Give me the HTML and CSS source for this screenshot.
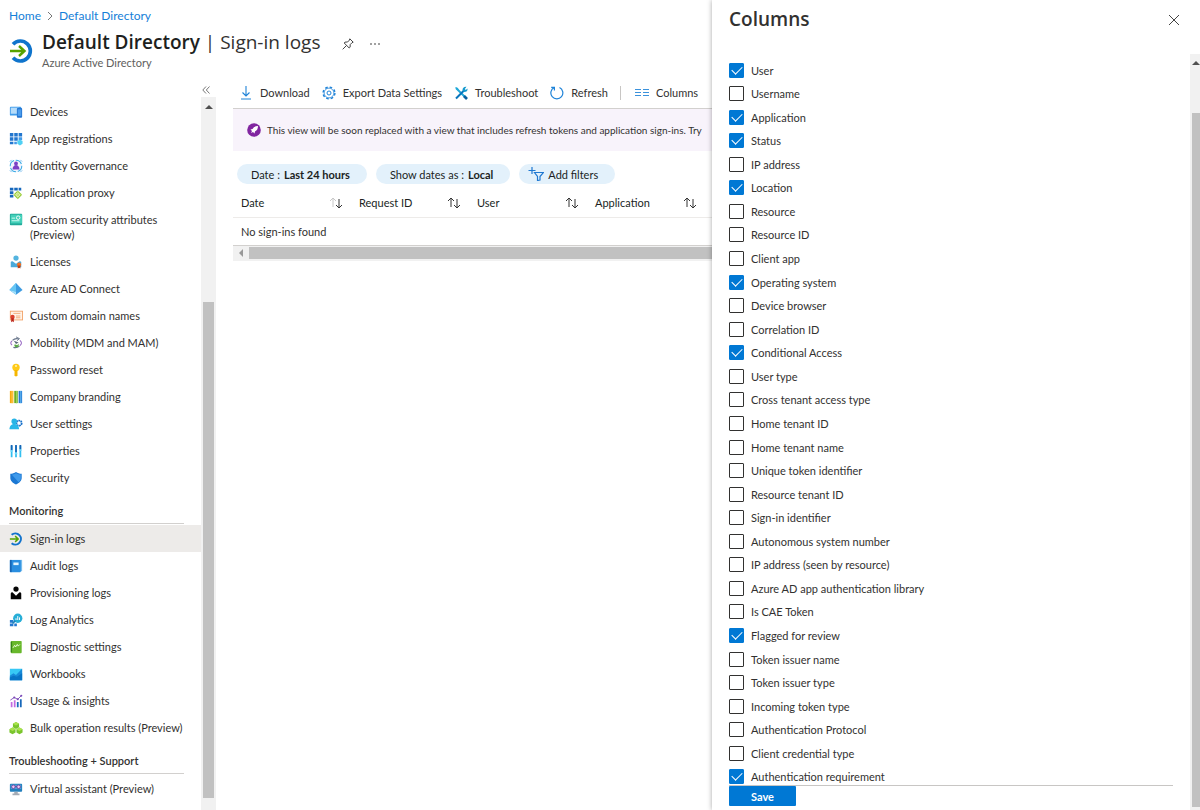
FILE: index.html
```html
<!DOCTYPE html>
<html lang="en">
<head>
<meta charset="utf-8">
<title>Default Directory | Sign-in logs</title>
<link rel="stylesheet" href="styles.css">
</head>
<body>
<div class="app">
<div class="workspace">
  <header class="page-header">
    <nav class="breadcrumb" aria-label="Breadcrumb">
      <a href="#">Home</a>
      <svg class="crumb-sep" viewBox="0 0 6 10"><path d="M1 1l4 4-4 4" fill="none" stroke="#777"/></svg>
      <a href="#">Default Directory</a>
    </nav>
    <div class="title-row">
      <svg class="title-icon" viewBox="0 0 24 24"><path d="M4 5.2A10 10 0 1 1 4 18.8" fill="none" stroke="#0f74cc" stroke-width="3.6"/><path d="M1 12h14M10 7l5.5 5-5.5 5" fill="none" stroke="#57a300" stroke-width="2.4"/></svg>
      <div class="title-text">
        <h1><strong>Default Directory</strong> | Sign-in logs</h1>
        <p>Azure Active Directory</p>
      </div>
      <button class="icon-button pin" aria-label="Pin"><svg viewBox="0 0 12 12"><path d="M7.800.8l3.400 3.400-1.200.5-1.800 1.900-.1 2.600-.9.800L2.200 5l.8-.9 2.600-.1 1.800-1.900zM4.500 7.500L.7 11.300" fill="none" stroke="#444"/></svg></button>
      <button class="icon-button more" aria-label="More"><svg viewBox="0 0 12 12"><path d="M1 6h2M5 6h2M9 6h2" stroke="#444" stroke-width="1.200"/></svg></button>
    </div>
  </header>
  <div class="body-row">
    <aside class="sidebar">
      <nav class="menu" aria-label="Directory">
        <button class="collapse" aria-label="Collapse menu"><svg viewBox="0 0 8 8"><path d="M4 .5L.8 4 4 7.500M7.500.5L4.300 4l3.200 3.500" fill="none" stroke="#555" stroke-width=".8"/></svg></button>
        <a href="#"><svg viewBox="0 0 16 16"><rect x="1" y="2" width="13" height="10" rx="1" fill="#3f9bea"/><rect x="2" y="3" width="9" height="7" fill="#b5dcfa"/><rect x="9" y="3.500" width="6" height="11" rx="1" fill="#2576d2"/><rect x="10" y="5" width="4" height="7.500" fill="#4b9cec"/></svg>Devices</a>
        <a href="#"><svg viewBox="0 0 16 16"><path d="M1 1h4v4H1zM6 1h4v4H6zM11 1h4v4h-4zM1 6h4v4H1zM6 6h4v4H6zM1 11h4v3H1z" fill="#2276ce"/><path d="M11 6h4v3h-4zM6 11h3v3H6z" fill="#4199e8"/><path d="M12.500 8.500l3 1.700v3.300l-3 1.800-3-1.800v-3.300z" fill="#50d0f4"/></svg>App registrations</a>
        <a href="#"><svg viewBox="0 0 16 16"><circle cx="8" cy="8" r="6.600" fill="#f2f4fd" stroke="#38a9e4" stroke-width="1.200" stroke-dasharray="8 2"/><circle cx="8" cy="5" r="2.200" fill="#7b3fc5"/><path d="M4 12c0-7 8-7 8 0z" fill="#7b3fc5"/><path d="M1 3l2-2M13 1l2 2M1 13l2 2M13 15l2-2" stroke="#6fb5ea"/></svg>Identity Governance</a>
        <a href="#"><svg viewBox="0 0 16 16"><path d="M1 2h4v3H1zM6 2h4v3H6zM11 2h3v3h-3zM1 6h4v3H1zM1 10h4v3H1z" fill="#1768bd"/><path d="M10 5l5 5-5 5-5-5z" fill="#91c82e"/><circle cx="10" cy="10" r="2" fill="none" stroke="#f1fad1"/><path d="M10 5.500v9M5.500 10h9" stroke="#e3f4af" stroke-width=".7"/></svg>Application proxy</a>
        <a class="two-line" href="#"><svg viewBox="0 0 16 16"><rect x="1" y="2" width="14" height="13" rx="1" fill="#20a999"/><rect x="2" y="3" width="13" height="10" fill="#43d0b9"/><circle cx="10.500" cy="6.500" r="2" fill="none" stroke="#fff"/><path d="M3 7h4M3 10h9" stroke="#e4fff9"/></svg><span>Custom security attributes<br>(Preview)</span></a>
        <a href="#"><svg viewBox="0 0 16 16"><circle cx="8" cy="3.500" r="3" fill="#54b4df"/><path d="M2 14V8q0-1 2-1l4 3 4-3q2 0 2 1v6z" fill="#4ba9d9"/><circle cx="11.500" cy="11" r="2.400" fill="#f37021"/><path d="M10 12h3v3.500l-1.500-1-1.500 1z" fill="#ba3f16"/></svg>Licenses</a>
        <a href="#"><svg viewBox="0 0 16 16"><path d="M8 1l7.500 8L8 14.500.5 9z" fill="#3c9be1"/><path d="M8 1L.5 9 8 11z" fill="#65c6f4"/><path d="M.5 9L8 11v3.500z" fill="#a4e1fa"/></svg>Azure AD Connect</a>
        <a href="#"><svg viewBox="0 0 16 16"><rect x="1.500" y="2.500" width="14" height="10" fill="#fff3e7" stroke="#f2a165"/><path d="M5 5h8M8 8h5M8 10h5" stroke="#f1a66e"/><circle cx="4" cy="9" r="2.500" fill="#dc402b"/><path d="M2.500 10.500h3V15L4 14l-1.500 1z" fill="#bb231a"/></svg>Custom domain names</a>
        <a href="#"><svg viewBox="0 0 16 16"><path d="M3.500 10.500Q.5 8 3.500 5.500M12.500 11q3.500-3 0-6" fill="none" stroke="#9a6bc5" stroke-width="1.200"/><path d="M4 5q3-3 7.500-1.500M12 11.500q-3 2.500-7 1.500" fill="none" stroke="#68758a" stroke-width="1.200"/><path d="M5.500 5.500l5.500 2-3 1.500z" fill="#58677c"/><path d="M6.500 9.500l3 1 1.500-2v3.500L8 13l-2-1.500z" fill="#59a743"/><path d="M8 1l4 2-3 2.500" fill="none" stroke="#68758a"/></svg>Mobility (MDM and MAM)</a>
        <a href="#"><svg viewBox="0 0 16 16"><circle cx="8" cy="5" r="4.200" fill="#ffca18"/><path d="M6.300 8h3.400v6L8 15.700 6.300 14z" fill="#f5b600"/><circle cx="8" cy="3.500" r="1.100" fill="#fff4bd"/></svg>Password reset</a>
        <a href="#"><svg viewBox="0 0 16 16"><path d="M1 1h4v14H1z" fill="#f6a80c"/><path d="M3 1h1v14H3z" fill="#ffd365"/><path d="M6 1h4v14H6z" fill="#6aac24"/><path d="M8 1h1v14H8z" fill="#a0d85a"/><path d="M11 1h4v14h-4z" fill="#2179d4"/><path d="M13 1h1v14h-1z" fill="#75c6f5"/></svg>Company branding</a>
        <a href="#"><svg viewBox="0 0 16 16"><circle cx="11.500" cy="7" r="3" fill="none" stroke="#1871ca" stroke-width="2" stroke-dasharray="2 .6"/><circle cx="6" cy="5" r="3.200" fill="#28b4e6"/><path d="M.5 14C.5 6 11.500 6 11.500 14z" fill="#29b7e9"/></svg>User settings</a>
        <a href="#"><svg viewBox="0 0 16 16"><path d="M3 2v13M8 2v13M13 2v13" stroke="#32bff0" stroke-width="2"/><path d="M3 1v6M8 1v8M13 1v5" stroke="#1765b6" stroke-width="2"/><path d="M1.500 8h3M6.500 11h3M11.500 7h3" stroke="#79dbfc" stroke-width="1.500"/></svg>Properties</a>
        <a href="#"><svg viewBox="0 0 16 16"><path d="M8 1c2 1.500 4 2 6.500 2v5c0 3.500-3 5.800-6.500 7.500C4.500 13.800 1.500 11.500 1.500 8V3C4 3 6 2.500 8 1z" fill="#1c78d3"/><path d="M8 2.500c2 1 3.500 1.500 5.500 1.600V8c0 2-1 3.500-2.500 4.800L3 4.100c2-.1 3.500-.6 5-1.600z" fill="#3f9aeb"/></svg>Security</a>
        <h2>Monitoring</h2>
        <a class="current" href="#" aria-current="page"><svg viewBox="0 0 16 16"><path d="M3 3.200a6.400 6.400 0 1 1 0 9.600" fill="none" stroke="#1273cc" stroke-width="2.300"/><path d="M1 8h9M7 4.700L10.500 8 7 11.300" fill="none" stroke="#57a300" stroke-width="1.700"/></svg>Sign-in logs</a>
        <a href="#"><svg viewBox="0 0 16 16"><path d="M3 1h12v13H3z" fill="#79bdec"/><rect x="1" y="1" width="12.500" height="14" rx="1" fill="#298ee0"/><path d="M1 1h2v14H1z" fill="#1665b6"/><path d="M5 4h6v3H5z" fill="#e2f5ff"/></svg>Audit logs</a>
        <a href="#"><svg viewBox="0 0 16 16"><circle cx="8" cy="3.500" r="3" fill="#050505"/><path d="M2 15V8.500Q2 7 4 7l4 4 4-4q2 0 2 1.500V15z" fill="#050505"/></svg>Provisioning logs</a>
        <a href="#"><svg viewBox="0 0 16 16"><path d="M1 8h4v3H1zM1 12h4v3H1zM6 12h3v3H6z" fill="#2379d0"/><circle cx="10" cy="6" r="5.300" fill="#27aed7"/><path d="M8 8V6M10 8V3.500M12 8V5" stroke="#fff" stroke-width="1.100"/><path d="M7 9l-3 3" stroke="#1a81bb" stroke-width="2"/></svg>Log Analytics</a>
        <a href="#"><svg viewBox="0 0 16 16"><rect x="2" y="1" width="12.500" height="14" rx="1" fill="#68b82b"/><path d="M2 2h1.500v12H2z" fill="#36851a"/><path d="M4.500 9l2-3 1 2 2-3 1 2 2-2" fill="none" stroke="#f2ffe6"/></svg>Diagnostic settings</a>
        <a href="#"><svg viewBox="0 0 16 16"><rect x="1" y="2" width="14" height="13" fill="#37c8f5"/><path d="M1 10l4-3 3 2 7-7v13H1z" fill="#188ad8"/><path d="M1 12l4-2 4 1 6-4v8H1z" fill="#0873c5"/></svg>Workbooks</a>
        <a href="#"><svg viewBox="0 0 16 16"><path d="M2 9h2v6H2zM5.500 7h2v8h-2z" fill="#c36be1"/><path d="M9 9h2v6H9zM12.500 6h2v9h-2z" fill="#1768ba"/><path d="M1.500 7L6 4l4 2 4-4" fill="none" stroke="#7a48b8"/><circle cx="6" cy="4" r="1.200" fill="#7a48b8"/><circle cx="10" cy="6" r="1.200" fill="#7a48b8"/><circle cx="14" cy="2" r="1.200" fill="#7a48b8"/></svg>Usage &amp; insights</a>
        <a href="#"><svg viewBox="0 0 16 16"><path d="M8 1l3.500 2v4L8 9 4.500 7V3zM4 7.500l3.500 2v3.500L4 15 .5 13V9.500zM12 7.500l3.500 2V13L12 15l-3.500-2V9.500z" fill="#7ac52d"/><path d="M8 1l3.500 2L8 5 4.500 3zM4 7.500l3.500 2L4 11.500.5 9.500zM12 7.500l3.500 2-3.500 2-3.500-2z" fill="#aae44d"/></svg>Bulk operation results (Preview)</a>
        <h2>Troubleshooting + Support</h2>
        <a href="#"><svg viewBox="0 0 16 16"><rect x="1" y="2" width="14" height="9" rx="1" fill="#237fbd"/><path d="M2 3h12v5H2z" fill="#49a6d9"/><circle cx="5" cy="5.500" r="2" fill="#eec8f3" stroke="#713b9b"/><circle cx="11" cy="5.500" r="2" fill="#eec8f3" stroke="#713b9b"/><path d="M7 5h2" stroke="#713b9b"/><path d="M6 11h4v2h2v2H4v-2h2z" fill="#a4aab4"/></svg>Virtual assistant (Preview)</a>
      </nav>
      <div class="side-scroll"><i class="arrow-up"></i><div class="side-thumb"></div></div>
    </aside>
    <main class="content">
      <div class="toolbar">
        <button class="tool"><svg viewBox="0 0 14 14"><path d="M7 0v10M3.500 6.500L7 10l3.500-3.500M2 13h10" fill="none" stroke="#1f83d8" stroke-width="1.100"/></svg>Download</button>
        <button class="tool"><svg viewBox="0 0 14 14"><circle cx="7" cy="7" r="5.900" fill="none" stroke="#1f83d8" stroke-width="1.400" stroke-dasharray="2.600 2.030"/><circle cx="7" cy="7" r="4.900" fill="none" stroke="#1f83d8" stroke-width=".8"/><circle cx="7" cy="7" r="2" fill="none" stroke="#1f83d8"/></svg>Export Data Settings</button>
        <button class="tool"><svg viewBox="0 0 14 14"><path d="M2 2l10 10" stroke="#21a9d9" stroke-width="2"/><path d="M1 1l3 1 1 3-2-1z" fill="#21a9d9"/><path d="M2 12.500l8-8" stroke="#0875bd" stroke-width="2"/><path d="M12.500.8L10.800 3l1 1L13.500 2.500Q14 6 10 6L8.500 4.300Q8.500.5 12.500.8z" fill="#159ace"/><path d="M10 10l3 3" stroke="#075f9f" stroke-width="2.600"/></svg>Troubleshoot</button>
        <button class="tool"><svg viewBox="0 0 14 14"><path d="M4.200 1.500A6 6 0 1 0 9.500 1.500M1.200 1.300h3.200v3.300" fill="none" stroke="#1f83d8" stroke-width="1.200"/></svg>Refresh</button>
        <span class="tool-divider"></span>
        <button class="tool"><svg viewBox="0 0 14 14"><path d="M0 3.500h6M8 3.500h6M0 6.500h6M8 6.500h6M0 9.500h6M8 9.500h6" stroke="#3b92dc"/></svg>Columns</button>
      </div>
      <div class="notice"><svg viewBox="0 0 14 14"><circle cx="7" cy="7" r="6.800" fill="#8125a0"/><path d="M11 3Q7 3 5.500 6L3.500 6.500 5 8 4 10l2-1 1.500 1.500L8 8.500Q11 7 11 3z" fill="#fff"/></svg><span>This view will be soon replaced with a view that includes refresh tokens and application sign-ins. Try</span></div>
      <div class="filters">
        <button class="pill">Date : <b>Last 24 hours</b></button>
        <button class="pill">Show dates as : <b>Local</b></button>
        <button class="pill add"><svg viewBox="0 0 16 14"><path d="M4 0v7M.5 3.500h7M6.500 5.500h9L12 9.500V13l-2.500.5v-4z" fill="none" stroke="#1f78d1" stroke-width="1.200"/></svg>Add filters</button>
      </div>
      <table class="logs">
        <thead><tr>
          <th>Date<svg viewBox="0 0 14 12"><path d="M4 10V1M1 4l3-3 3 3" fill="none" stroke="#c8c8c8"/><path d="M10 2v9M7 8l3 3 3-3" fill="none" stroke="#333"/></svg></th>
          <th>Request ID<svg viewBox="0 0 14 12"><path d="M4 10V1M1 4l3-3 3 3M10 2v9M7 8l3 3 3-3" fill="none" stroke="#333"/></svg></th>
          <th>User<svg viewBox="0 0 14 12"><path d="M4 10V1M1 4l3-3 3 3M10 2v9M7 8l3 3 3-3" fill="none" stroke="#333"/></svg></th>
          <th>Application<svg viewBox="0 0 14 12"><path d="M4 10V1M1 4l3-3 3 3M10 2v9M7 8l3 3 3-3" fill="none" stroke="#333"/></svg></th>
        </tr></thead>
        <tbody><tr><td colspan="4">No sign-ins found</td></tr></tbody>
      </table>
      <div class="table-scroll"><i class="arrow-left"></i><div class="table-thumb"></div></div>
    </main>
  </div>
</div>
<section class="panel" aria-label="Columns">
  <div class="panel-main">
    <header class="panel-header"><h2>Columns</h2><button class="icon-button close" aria-label="Close"><svg viewBox="0 0 12 12"><path d="M1 1l10 10M11 1L1 11" stroke="#444"/></svg></button></header>
    <div class="options">
      <label><input type="checkbox" checked>User</label>
      <label><input type="checkbox">Username</label>
      <label><input type="checkbox" checked>Application</label>
      <label><input type="checkbox" checked>Status</label>
      <label><input type="checkbox">IP address</label>
      <label><input type="checkbox" checked>Location</label>
      <label><input type="checkbox">Resource</label>
      <label><input type="checkbox">Resource ID</label>
      <label><input type="checkbox">Client app</label>
      <label><input type="checkbox" checked>Operating system</label>
      <label><input type="checkbox">Device browser</label>
      <label><input type="checkbox">Correlation ID</label>
      <label><input type="checkbox" checked>Conditional Access</label>
      <label><input type="checkbox">User type</label>
      <label><input type="checkbox">Cross tenant access type</label>
      <label><input type="checkbox">Home tenant ID</label>
      <label><input type="checkbox">Home tenant name</label>
      <label><input type="checkbox">Unique token identifier</label>
      <label><input type="checkbox">Resource tenant ID</label>
      <label><input type="checkbox">Sign-in identifier</label>
      <label><input type="checkbox">Autonomous system number</label>
      <label><input type="checkbox">IP address (seen by resource)</label>
      <label><input type="checkbox">Azure AD app authentication library</label>
      <label><input type="checkbox">Is CAE Token</label>
      <label><input type="checkbox" checked>Flagged for review</label>
      <label><input type="checkbox">Token issuer name</label>
      <label><input type="checkbox">Token issuer type</label>
      <label><input type="checkbox">Incoming token type</label>
      <label><input type="checkbox">Authentication Protocol</label>
      <label><input type="checkbox">Client credential type</label>
      <label><input type="checkbox" checked>Authentication requirement</label>
    </div>
    <footer class="panel-footer"><button class="save">Save</button></footer>
  </div>
  <div class="panel-scroll"><i class="arrow-up"></i><div class="panel-thumb"></div></div>
</section>
</div>
</body>
</html>
```

FILE: styles.css
```css
* { box-sizing: border-box; }
body {
  margin: 0;
  background: #fff;
  color: #323130;
  font: 11px/15px Lato, "Open Sans", sans-serif;
}
button { margin: 0; padding: 0; border: 0; background: none; color: inherit; font: inherit; }
svg { display: block; flex: none; }
a { color: inherit; text-decoration: none; }
h1, h2, p { margin: 0; }

.app { display: flex; height: 100vh; overflow: hidden; }
.workspace { flex: 1; min-width: 0; display: flex; flex-direction: column; overflow: hidden; }

.page-header { padding: 8px 9px 0; height: 82px; flex: none; }
.breadcrumb { display: flex; align-items: center; gap: 6px; height: 15px; color: #1580d8; font-size: 12px; }
.crumb-sep { width: 6px; height: 10px; }
.title-row { display: flex; align-items: flex-start; padding-top: 5px; }
.title-icon { width: 24px; height: 24px; margin: 11px 9px 0 0; }
.title-text h1 { font: 400 19px/28px "Open Sans", "Noto Sans", sans-serif; white-space: nowrap; }
.title-text strong { font-weight: 600; color: #201f1e; }
.title-text p { line-height: 14px; color: #605e5c; }
.icon-button svg { width: 12px; height: 12px; }
.pin { margin: 10px 0 0 22px; }
.more { margin: 10px 0 0 15px; }

.body-row { display: flex; flex: 1; min-height: 0; }
.sidebar { display: flex; flex: 0 0 217px; min-width: 0; }
.menu { flex: 1; min-width: 0; }
.menu a { display: flex; align-items: center; gap: 7px; height: 27px; padding-left: 9px; white-space: nowrap; }
.menu a svg { width: 14px; height: 14px; }
.menu a.two-line { height: 42px; align-items: flex-start; padding-top: 6px; }
.menu a.current { background: #edebe9; }
.menu h2 { margin: 0 17px 1px 9px; padding: 12px 0 5px; border-bottom: 1px solid #d2d0ce; font-size: 11px; line-height: 15px; font-weight: 600; white-space: nowrap; }
.collapse { display: block; height: 16px; padding: 2px 0; margin-left: 202px; }
.collapse svg { width: 8px; height: 8px; }
.side-scroll { flex: 0 0 15px; margin: 15px 1px 0 0; background: #f1f1f1; padding: 8px 2px 12px; display: flex; flex-direction: column; align-items: center; }
.arrow-up { border: 4px solid transparent; border-top: 0; border-bottom-color: #505050; }
.side-thumb { width: 100%; height: 496px; margin-top: auto; background: #c1c1c1; }

.content { flex: 1; min-width: 0; padding-left: 16px; overflow: hidden; }
.toolbar { display: flex; align-items: center; height: 27px; padding: 0 0 5px 6px; border-bottom: 1px solid #d2d0ce; white-space: nowrap; }
.tool { display: flex; align-items: center; gap: 7px; flex: none; margin-right: 12px; }
.tool svg { width: 14px; height: 14px; }
.tool-divider { flex: none; width: 1px; height: 14px; margin-right: 14px; background: #c8c6c4; }
.notice { display: flex; align-items: center; gap: 6px; height: 42px; padding-left: 14px; background: #f8f3fb; font-size: 10px; white-space: nowrap; }
.notice svg { width: 14px; height: 14px; }
.filters { display: flex; gap: 9px; padding: 13px 4px 4px; }
.pill { display: flex; align-items: center; gap: 4px; height: 20px; padding: 0 17px 0 14px; border-radius: 10px; background: #e3f1fb; color: #201f1e; white-space: nowrap; }
.pill b { font-weight: 700; }
.pill.add { padding-left: 9px; }
.pill svg { width: 16px; height: 14px; }
.logs { width: 100%; table-layout: fixed; border-collapse: collapse; text-align: left; }
.logs th { width: 118px; height: 29px; padding: 0 8px; font-weight: 400; color: #201f1e; }
.logs th:last-child { width: auto; padding-right: 15px; }
.logs th svg { float: right; width: 14px; height: 12px; margin-top: 2px; }
.logs td { height: 28px; padding: 0 8px; border-top: 1px solid #edebe9; border-bottom: 1px solid #d2d0ce; }
.table-scroll { display: flex; align-items: center; height: 15px; padding-left: 6px; background: #f1f1f1; }
.arrow-left { border: 4px solid transparent; border-left: 0; border-right-color: #999; }
.table-thumb { flex: 1; height: 12px; margin-left: 6px; background: #c1c1c1; }

.panel { display: flex; flex: 0 0 488px; z-index: 1; background: #fff; box-shadow: 0 0 5px rgba(0, 0, 0, .35); }
.panel-main { flex: 1; min-width: 0; display: flex; flex-direction: column; padding-left: 17px; }
.panel-header { display: flex; align-items: flex-start; justify-content: space-between; height: 62px; flex: none; padding: 7px 10px 0 0; }
.panel-header h2 { font: 600 19px/24px "Open Sans", "Noto Sans", sans-serif; }
.close { margin-top: 7px; }
.options { flex: 1; display: flex; flex-direction: column; justify-content: space-between; align-items: flex-start; }
.options label { display: flex; align-items: center; gap: 7px; height: 16px; white-space: nowrap; }
.options input { appearance: none; display: grid; place-items: center; width: 15px; height: 15px; margin: 0; border: 1px solid #323130; border-radius: 1px; }
.options input:checked { border-color: #0078d4; background: #0078d4; }
.options input:checked::after { content: ""; width: 9px; height: 5px; margin-bottom: 3px; border: solid #fff; border-width: 0 0 1px 1px; transform: rotate(-45deg); }
.panel-footer { flex: none; margin-right: 17px; padding-bottom: 4px; border-top: 1px solid #c8c6c4; }
.save { display: block; width: 67px; height: 20px; border-radius: 1px; background: #0078d4; color: #fff; font-weight: 700; }
.panel-scroll { flex: 0 0 10px; margin-top: 54px; padding: 7px 0 3px 2px; background: #f1f1f1; display: flex; flex-direction: column; }
.panel-thumb { flex: 1; margin-top: 48px; background: #c1c1c1; }
```
